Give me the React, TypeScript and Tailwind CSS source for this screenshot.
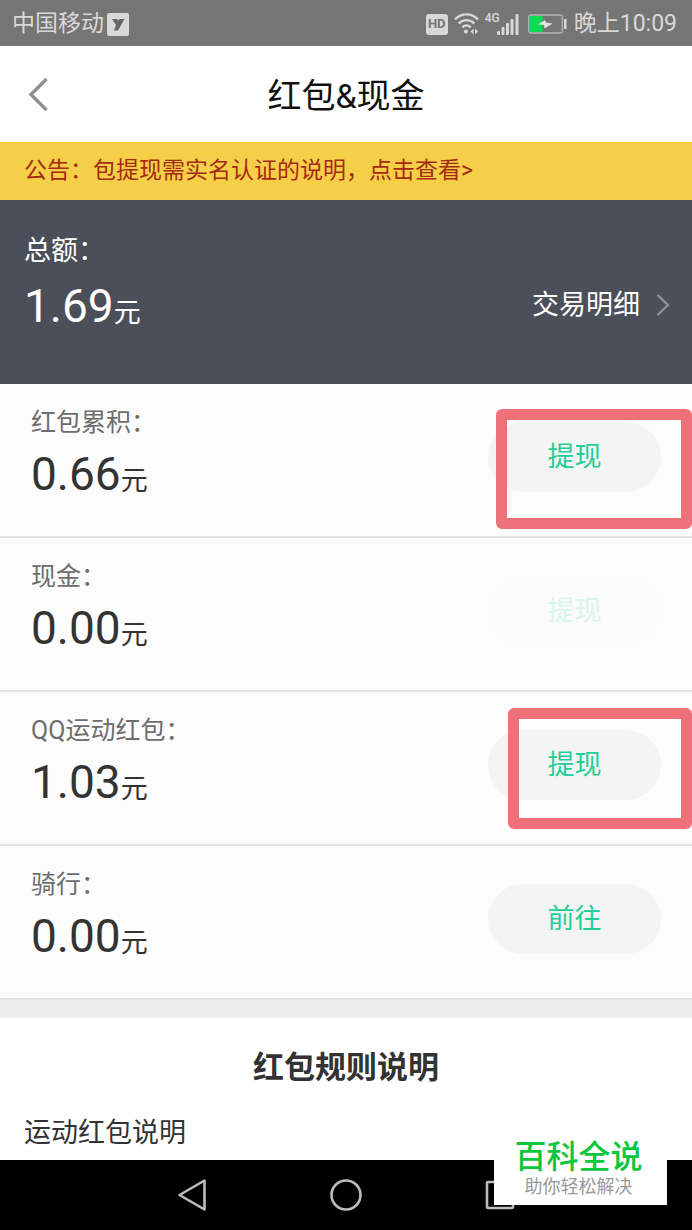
interface Account {
  name: string
  amount: string
  action: string
  disabled?: boolean
  mark?: 'wide' | 'narrow'
}

const accounts: Account[] = [
  { name: '红包累积：', amount: '0.66', action: '提现', mark: 'wide' },
  { name: '现金：', amount: '0.00', action: '提现', disabled: true },
  { name: 'QQ运动红包：', amount: '1.03', action: '提现', mark: 'narrow' },
  { name: '骑行：', amount: '0.00', action: '前往' },
]

function StatusBar() {
  return (
    <div className="flex h-[46px] items-center justify-between bg-[#757575] pt-[2px] pr-[15px] pl-3 text-[23px] leading-[34px] text-[#d8d8d8]">
      <div className="flex items-center gap-[3px]">
        <span>中国移动</span>
        <svg width="22" height="23" viewBox="0 0 22 23">
          <rect width="22" height="23" rx="2" fill="#d8d8d8" />
          <path d="M5 6h4.500l1.500 1.500L12.500 6h5L11 17.500H7L9 12z" fill="#666666" />
        </svg>
      </div>
      <div className="flex items-center">
        <span className="mr-[6px] flex h-[21px] w-[22px] items-center justify-center rounded-[3px] bg-[#d8d8d8] text-[13px] font-bold text-[#757575]">
          HD
        </span>
        {/* wifi with traffic arrows */}
        <svg className="mr-[6px]" width="25" height="22" viewBox="0 0 25 22" fill="none" stroke="#d8d8d8" strokeWidth="2.4">
          <path d="M1 6.500C7.500-.3 17.500-.3 24 6.500" />
          <path d="M4.700 10.500c4.400-4.500 11.200-4.500 15.600 0" />
          <path d="M8.300 14.300c2.500-2.500 5.900-2.500 8.400 0" />
          <circle cx="12" cy="18.500" r="2" fill="#d8d8d8" stroke="none" />
          <path d="M16.500 18.500l3-3v6zM24 18.500l-3-3v6z" fill="#d8d8d8" stroke="none" />
        </svg>
        <div className="mr-[9px] flex h-[22px] items-start">
          <span className="w-3 text-[12px] leading-[11px] font-medium">4G</span>
          <svg width="22" height="22" viewBox="0 0 22 22" fill="#d8d8d8">
            <rect x="0" y="18" width="3" height="4" rx="1" />
            <rect x="4.500" y="14" width="3" height="8" rx="1" />
            <rect x="9" y="10" width="3" height="12" rx="1" />
            <rect x="13.500" y="6" width="3" height="16" rx="1" />
            <rect x="18.500" y="1" width="3" height="21" rx="1" />
          </svg>
        </div>
        <svg className="mr-[7px]" width="39" height="20" viewBox="0 0 39 20">
          <rect x=".8" y="1" width="33.500" height="18" rx="2" fill="none" stroke="#b4b4b4" strokeWidth="1.400" />
          <rect x="2" y="2" width="12.500" height="16" fill="#0ddc52" />
          <path d="M10 10.500l7-4.500 1 2.500 6.500 1-8 5-.5-3.500z" fill="#e4e4e4" />
          <rect x="36" y="5" width="2.500" height="10" fill="#d8d8d8" />
        </svg>
        <span>晚上10:09</span>
      </div>
    </div>
  )
}

function AccountRow({ account }: { account: Account }) {
  return (
    <li className="relative flex h-[154px] items-start justify-between border-b-2 border-[#e3e3e3] bg-[#fcfcfc] px-[31px]">
      <div className="pt-6">
        <div className="text-[25px] leading-[30px] text-[#6d6d6d]">{account.name}</div>
        <div className="text-[46px] leading-[72px] text-[#333333]">
          {account.amount}
          <span className="text-[27px]">元</span>
        </div>
      </div>
      <button
        type="button"
        disabled={account.disabled}
        className="mt-[38px] h-[70px] w-[173px] rounded-full bg-[#f4f4f4] text-[27px] text-[#1fcf96] disabled:bg-[#fbfbfb] disabled:text-[#d8f5ea]"
      >
        {account.action}
      </button>
      {account.mark === 'wide' && (
        <div className="pointer-events-none absolute top-[25px] right-0 h-[120px] w-[196px] rounded-md border-[11px] border-[#ee7078]" />
      )}
      {account.mark === 'narrow' && (
        <div className="pointer-events-none absolute top-[16px] right-0 h-[121px] w-[184px] rounded-md border-[11px] border-[#ee7078]" />
      )}
    </li>
  )
}

function NavBar() {
  return (
    <nav className="flex h-[70px] justify-center bg-black">
      <div className="grid w-2/3 grid-cols-3 place-items-center">
        <button type="button" aria-label="返回">
          <svg width="32" height="34" viewBox="0 0 32 34" fill="none" stroke="#bcbcbc" strokeWidth="2.600" strokeLinejoin="round">
            <path d="M28.500 2.500v29L3.500 17z" />
          </svg>
        </button>
        <button type="button" aria-label="主屏幕">
          <svg width="32" height="32" viewBox="0 0 32 32" fill="none" stroke="#bcbcbc" strokeWidth="2.600">
            <circle cx="16" cy="16" r="14.500" />
          </svg>
        </button>
        <button type="button" aria-label="最近任务">
          <svg width="32" height="32" viewBox="0 0 32 32" fill="none" stroke="#bcbcbc" strokeWidth="2.600">
            <rect x="3" y="3" width="26" height="26" rx="1" />
          </svg>
        </button>
      </div>
    </nav>
  )
}

export default function App() {
  return (
    <div
      lang="zh-CN"
      className="relative flex min-h-screen flex-col bg-white font-['Roboto','Noto_Sans_CJK_SC',sans-serif]"
    >
      <StatusBar />

      <header className="grid h-24 grid-cols-[80px_1fr_80px] items-center">
        <button type="button" aria-label="返回" className="pl-7">
          <svg width="20" height="34" viewBox="0 0 20 34" fill="none" stroke="#8e8e8e" strokeWidth="3.400">
            <path d="M18.500 2L3 17.500 18.500 33" />
          </svg>
        </button>
        <h1 className="pt-1 text-center text-[34px] leading-[44px] text-[#111111]">红包&amp;现金</h1>
      </header>

      <a href="#notice" className="flex h-[58px] items-center bg-[#f5cf48] px-6 text-[23px] leading-[30px] text-[#a52a12]">
        公告：包提现需实名认证的说明，点击查看&gt;
      </a>

      {/* Total */}
      <section className="flex h-[184px] items-start justify-between bg-[#4b4f5a] pr-[22px] pl-6 text-white">
        <div className="pt-9">
          <div className="text-[27px] leading-[30px]">总额：</div>
          <div className="pt-1 text-[46px] leading-[72px]">
            1.69
            <span className="text-[27px]">元</span>
          </div>
        </div>
        <a href="#details" className="mt-[90px] flex items-center gap-4 text-[27px] leading-[30px]">
          交易明细
          <svg width="14" height="22" viewBox="0 0 14 22" fill="none" stroke="#8d9098" strokeWidth="2.400">
            <path d="M1.500 1L12 11 1.500 21" />
          </svg>
        </a>
      </section>

      <ul>
        {accounts.map((account) => (
          <AccountRow key={account.name} account={account} />
        ))}
      </ul>

      <div className="h-[18px] bg-[#ededed]" />

      {/* Rules */}
      <section className="flex-1 px-6 pt-[30px] text-[#333333]">
        <h2 className="text-center text-[31px] leading-[40px] font-bold">红包规则说明</h2>
        <p className="mt-[30px] text-[27px] leading-[30px]">运动红包说明</p>
      </section>

      <NavBar />

      {/* Site badge */}
      <div className="absolute right-[25px] bottom-[25px] w-[173px] bg-white pr-1 pb-[6px] text-center">
        <div className="text-[32px] leading-[36px] font-medium text-[#0cc63c]">百科全说</div>
        <div className="text-[18px] leading-[24px] text-[#999999]">助你轻松解决</div>
      </div>
    </div>
  )
}
